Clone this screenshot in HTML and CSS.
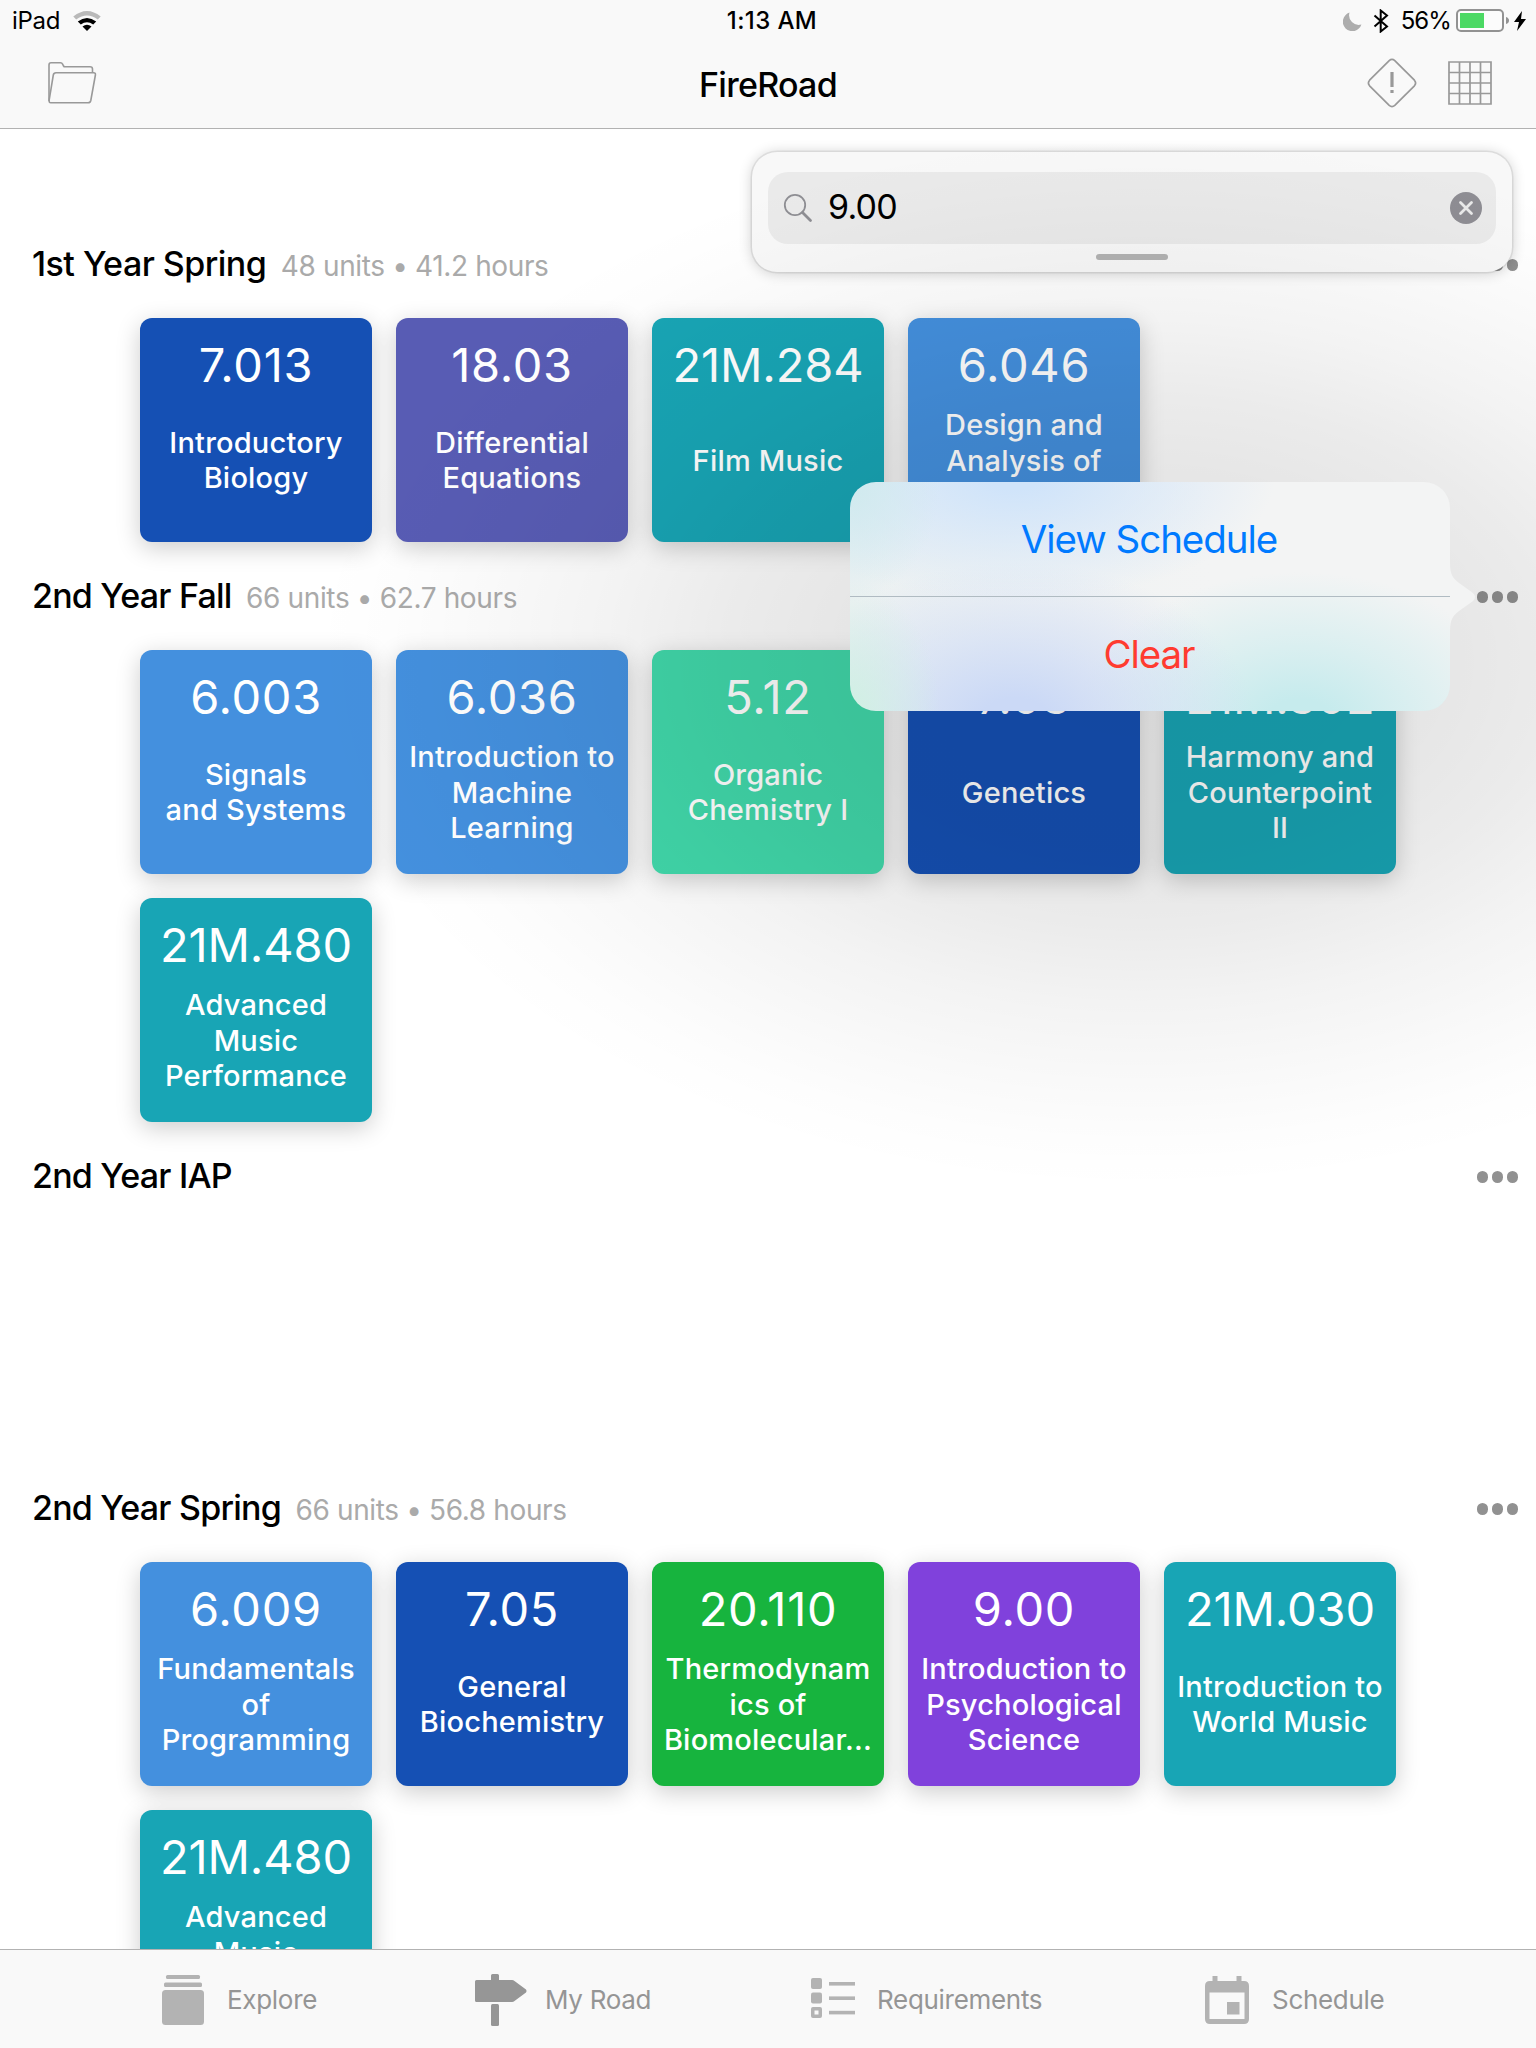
FILE: index.html
```html
<!DOCTYPE html>
<html lang="en">
<head>
<meta charset="utf-8">
<title>FireRoad</title>
<link rel="stylesheet" href="styles.css">
</head>
<body>
<div class="app">
  <header class="top">
    <div class="status">
      <div class="status-side">
        <span class="carrier">iPad</span>
        <svg class="wifi" width="28" height="20" viewBox="0 0 28 20"><path d="M0.300 5.500Q14 -5.500 27.700 5.500L24.800 8.400Q14 0.500 3.200 8.400Z" fill="#b9b9b9"/><path d="M4.800 10.600Q14 3.400 23.200 10.600L20.200 13.600Q14 9 7.800 13.600Z"/><path d="M9.500 15.500Q14 12.200 18.500 15.500L14 20Z"/></svg>
      </div>
      <span class="clock">1:13 AM</span>
      <div class="status-side status-right">
        <svg class="moon" width="19" height="19" viewBox="0 0 19 19"><path d="M6.500 0.600A9.500 9.500 0 1 0 18.400 12.500A9.600 9.600 0 0 1 6.500 0.600Z" fill="#adadad"/></svg>
        <svg class="bluetooth" width="16" height="24" viewBox="0 0 16 24"><path d="M1.500 6.500L14 17.500L7.700 22.500V1.500L14 6.500L1.500 17.500" fill="none" stroke="#000" stroke-width="2"/></svg>
        <span class="percent">56%</span>
        <svg class="battery" width="54" height="24" viewBox="0 0 54 24"><rect x="1" y="1" width="46" height="21" rx="4" fill="#fcfcfc" stroke="#929292" stroke-width="2"/><rect x="4" y="4" width="24" height="15" fill="#4cd964"/><path d="M50 8Q53 9 53 11.500T50 15Z" fill="#929292"/></svg>
        <svg class="bolt" width="12" height="20" viewBox="0 0 12 20"><path d="M8 0L0 11H5L3 20L12 8H7Z"/></svg>
      </div>
    </div>
    <div class="nav">
      <svg class="folder" width="50" height="44" viewBox="0 0 50 44" fill="none" stroke="#999" stroke-width="1.600" stroke-linejoin="round"><path d="M2 40V4Q2 1.800 4 1.800H13.500Q15 1.800 15.600 3.200L16.500 5Q17 5.800 18 5.800H43Q45.500 5.800 45.500 8V11.500"/><path d="M9 11.800H46.500Q48.800 11.800 48.400 14L43.800 39.500Q43.300 41.800 41 41.800H3.800Q1.800 41.800 2.200 39L6.300 14Q6.700 11.800 9 11.800Z"/></svg>
      <h1 class="title">FireRoad</h1>
      <div class="nav-actions">
        <svg width="50" height="50" viewBox="0 0 50 50" fill="none" stroke="#999"><path d="M22.200 2.600Q25 0.200 27.800 2.600L47.400 22.200Q49.800 25 47.400 27.800L27.800 47.400Q25 49.800 22.200 47.400L2.600 27.800Q0.200 25 2.600 22.200Z" stroke-width="1.700"/><path d="M25 14V29M25 32V35" stroke-width="3.200"/></svg>
        <svg width="44" height="44" viewBox="0 0 44 44" fill="none" stroke="#999" stroke-width="1.700"><path d="M1 1H43V43H1ZM11.500 1V43M22 1V43M32.500 1V43M1 11.500H43M1 22H43M1 32.500H43"/></svg>
      </div>
    </div>
  </header>

  <main class="road">
    <section class="term">
      <div class="term-head"><h2 class="loose">1st Year Spring</h2><span class="stats">48 units • 41.2 hours</span><span class="dots"><i></i><i></i><i></i></span></div>
      <div class="courses">
        <article class="card blue"><b>7.013</b><p>Introductory<br>Biology</p></article>
        <article class="card indigo"><b>18.03</b><p>Differential<br>Equations</p></article>
        <article class="card teal"><b>21M.284</b><p>Film Music</p></article>
        <article class="card sky"><b>6.046</b><p>Design and<br>Analysis of<br>&nbsp;</p></article>
      </div>
    </section>
    <section class="term">
      <div class="term-head"><h2>2nd Year Fall</h2><span class="stats">66 units • 62.7 hours</span><span class="dots"><i></i><i></i><i></i></span></div>
      <div class="courses">
        <article class="card sky"><b>6.003</b><p>Signals<br>and Systems</p></article>
        <article class="card sky"><b>6.036</b><p>Introduction to<br>Machine<br>Learning</p></article>
        <article class="card mint"><b>5.12</b><p>Organic<br>Chemistry I</p></article>
        <article class="card blue"><b>7.03</b><p>Genetics</p></article>
        <article class="card teal"><b>21M.302</b><p>Harmony and<br>Counterpoint<br>II</p></article>
        <article class="card teal"><b>21M.480</b><p>Advanced<br>Music<br>Performance</p></article>
      </div>
    </section>
    <section class="term">
      <div class="term-head"><h2>2nd Year IAP</h2><span class="dots"><i></i><i></i><i></i></span></div>
      <div class="courses"></div>
    </section>
    <section class="term">
      <div class="term-head"><h2>2nd Year Spring</h2><span class="stats">66 units • 56.8 hours</span><span class="dots"><i></i><i></i><i></i></span></div>
      <div class="courses">
        <article class="card sky"><b>6.009</b><p>Fundamentals<br>of<br>Programming</p></article>
        <article class="card blue"><b>7.05</b><p>General<br>Biochemistry</p></article>
        <article class="card green"><b>20.110</b><p>Thermodynam<br>ics of<br>Biomolecular...</p></article>
        <article class="card violet"><b>9.00</b><p>Introduction to<br>Psychological<br>Science</p></article>
        <article class="card teal"><b>21M.030</b><p>Introduction to<br>World Music</p></article>
        <article class="card teal"><b>21M.480</b><p>Advanced<br>Music<br>Performance</p></article>
      </div>
    </section>

    <div class="search-panel">
      <div class="search-field">
        <svg width="30" height="30" viewBox="0 0 30 30" fill="none" stroke="#8e8e93"><circle cx="12" cy="12" r="10.200" stroke-width="1.800"/><path d="M19.500 19.500L27.500 27.500" stroke-width="2.800" stroke-linecap="round"/></svg>
        <span class="query">9.00</span>
        <svg width="32" height="32" viewBox="0 0 32 32"><circle cx="16" cy="16" r="16" fill="#8e8d93"/><path d="M10.500 10.500L21.500 21.500M21.500 10.500L10.500 21.500" stroke="#e9e9e9" stroke-width="2.800" stroke-linecap="round"/></svg>
      </div>
      <div class="grip"></div>
    </div>

    <div class="shade"></div>
    <div class="popover">
      <button class="action">View Schedule</button>
      <button class="action danger">Clear</button>
      <svg class="tail" width="28" height="68" viewBox="0 0 28 68"><path d="M0 0C0 12 3 15 9 20L21 28.500Q29 34 21 39.500L9 48C3 53 0 56 0 68Z" fill="#f3f4f4"/></svg>
    </div>
  </main>

  <nav class="tabs">
    <a class="tab explore"><svg width="42" height="52" viewBox="0 0 42 52" fill="#b3b3b3"><rect x="4" y="1" width="34" height="4" rx="1.500"/><rect x="2" y="8.500" width="38" height="4.500" rx="1.500"/><rect x="0" y="16" width="42" height="35" rx="3.500"/></svg><span>Explore</span></a>
    <a class="tab myroad"><svg width="52" height="52" viewBox="0 0 52 52" fill="#969696"><path d="M16 6V1.500Q16 0 17.500 0H22.500Q24 0 24 1.500V6H37Q38.500 6 39.500 7L51 15.500Q52 17 51 18.500L39.500 27Q38.500 28 37 28H1.500Q0 28 0 26.500V7.500Q0 6 1.500 6Z"/><rect x="16" y="30" width="8" height="22" rx="1.500"/></svg><span>My Road</span></a>
    <a class="tab reqs"><svg width="44" height="52" viewBox="0 0 44 52" fill="#b3b3b3"><rect x="0" y="4" width="11" height="11" rx="2"/><rect x="0" y="18.500" width="11" height="11" rx="2"/><path d="M2 33H9Q11 33 11 35V42Q11 44 9 44H2Q0 44 0 42V35Q0 33 2 33ZM3.500 36.500V40.500H7.500V36.500Z" fill-rule="evenodd"/><rect x="18" y="8" width="26" height="3.600"/><rect x="18" y="22.400" width="26" height="3.600"/><rect x="18" y="36.800" width="26" height="3.600"/></svg><span>Requirements</span></a>
    <a class="tab sched"><svg width="44" height="52" viewBox="0 0 44 52" fill="#b3b3b3"><path d="M7.500 2H12.500V7H31.500V2H36.500V7H39Q44 7 44 12V45Q44 50 39 50H5Q0 50 0 45V12Q0 7 5 7H7.500ZM4.500 18.500V45H39.500V18.500Z" fill-rule="evenodd"/><rect x="22" y="28" width="12.500" height="12.500"/></svg><span>Schedule</span></a>
  </nav>
</div>
</body>
</html>
```
FILE: styles.css
```css
* { box-sizing: border-box; }
body, h1, h2, p { margin: 0; }
body {
  font-family: Inter, "Liberation Sans", sans-serif;
  color: #000;
  background: #fff;
}
svg { display: block; flex: none; }
.app {
  width: 1536px;
  height: 2048px;
  display: flex;
  flex-direction: column;
  overflow: hidden;
}

/* Status and navigation bars */
.top {
  height: 129px;
  flex: none;
  background: #f9f9f9;
  border-bottom: 1px solid #b2b2b2;
}
.status {
  height: 40px;
  display: grid;
  grid-template-columns: 1fr auto 1fr;
  align-items: center;
  padding: 2px 10px 0 12px;
  font-size: 24px;
  line-height: 38px;
}
.status-side { display: flex; align-items: center; }
.status-right { justify-content: flex-end; }
.wifi { margin-left: 13px; }
.carrier { letter-spacing: -0.3px; }
.clock { margin-left: 6px; font-weight: 500; letter-spacing: .4px; }
.bluetooth { margin-left: 11px; }
.percent { margin-left: 12px; letter-spacing: -0.9px; }
.battery { margin-left: 5px; }
.bolt { margin-left: 4px; }
.nav {
  height: 88px;
  display: grid;
  grid-template-columns: 1fr auto 1fr;
  align-items: center;
  padding: 0 44px 2px 47px;
}
.title { padding: 4px 3px 0 0; font-size: 34px; font-weight: 500; line-height: 44px; letter-spacing: -0.75px; }
.nav-actions { display: flex; justify-content: flex-end; align-items: center; gap: 31px; }

/* Terms */
.road {
  position: relative;
  flex: 1;
  min-height: 0;
  padding-top: 81px;
  overflow: hidden;
}
.term-head {
  height: 108px;
  display: flex;
  align-items: center;
  padding: 0 18px 0 32px;
}
.term-head h2 { font-size: 34px; font-weight: 500; line-height: 44px; letter-spacing: -0.78px; }
.term-head .loose { letter-spacing: -0.53px; }
.stats { margin: 4px 0 0 14.500px; font-size: 28px; line-height: 36px; letter-spacing: -0.37px; color: #aaa; }
.dots { display: flex; gap: 3.500px; margin: 2px 0 0 auto; }
.dots i { width: 11.300px; height: 11.300px; border-radius: 50%; background: #919191; }
.courses {
  min-height: 224px;
  display: grid;
  grid-template-columns: repeat(5, 232px);
  gap: 24px;
  padding-left: 140px;
}
.card {
  height: 224px;
  padding-top: 18px;
  border-radius: 12px;
  color: #fff;
  text-align: center;
  box-shadow: 0 6px 24px rgba(0, 0, 0, .2);
}
.card b {
  display: block;
  font-size: 47px;
  font-weight: 400;
  line-height: 58px;
  letter-spacing: .7px;
}
.teal b { letter-spacing: -0.1px; }
.card p {
  height: 106px;
  margin-top: 13.300px;
  display: grid;
  align-content: center;
  font-size: 29px;
  font-weight: 450;
  line-height: 35.600px;
  letter-spacing: .2px;
  white-space: nowrap;
}
.blue { background: #1550b4; }
.indigo { background: #585cb4; }
.teal { background: #18a5b5; }
.sky { background: #4490de; }
.mint { background: #41d8aa; }
.green { background: #17b43e; }
.violet { background: #8041dc; }

/* Floating search drawer */
.search-panel {
  position: absolute;
  left: 752px;
  top: 23px;
  width: 760px;
  height: 120px;
  padding: 20px 16px 0;
  border-radius: 25px;
  background: #f8f8f8;
  box-shadow: 0 0 0 1.500px rgba(0, 0, 0, .07), 0 1px 14px rgba(0, 0, 0, .2);
}
.search-field {
  height: 72px;
  display: flex;
  align-items: center;
  padding: 0 14px 0 15px;
  border-radius: 20px;
  background: #eaeaea;
}
.query { flex: 1; margin: -3px 0 0 15px; font-size: 34px; line-height: 44px; letter-spacing: -0.8px; }
.grip { width: 72px; height: 6px; margin: 10px auto 0; border-radius: 3px; background: #b3b3b3; }

/* Soft dimming round the term menu */
.shade {
  position: absolute;
  inset: 0;
  background: radial-gradient(830px 530px at 1140px 532px,
    rgba(0, 0, 0, .105) 0%, rgba(0, 0, 0, .099) 36%, rgba(0, 0, 0, .08) 50%,
    rgba(0, 0, 0, .049) 65%, rgba(0, 0, 0, .022) 80%, rgba(0, 0, 0, .007) 91%, rgba(0, 0, 0, 0) 100%);
}

/* Term menu */
.popover {
  position: absolute;
  left: 850px;
  top: 353px;
  width: 600px;
  height: 229px;
  border-radius: 26px;
  background:
    radial-gradient(90px 120px at 0 0, #cfeaee, rgba(207, 234, 238, 0)),
    radial-gradient(260px 125px at 165px -5px, #d0e4fa 10%, rgba(208, 228, 250, .5) 55%, rgba(208, 228, 250, 0)),
    radial-gradient(90px 130px at 0 100%, #d0f0e3, rgba(208, 240, 227, 0)),
    radial-gradient(240px 160px at 165px 240px, #cbd9f6 15%, rgba(203, 217, 246, .5) 55%, rgba(203, 217, 246, 0)),
    radial-gradient(225px 150px at 450px 240px, #c6ebed 15%, rgba(198, 235, 237, .5) 55%, rgba(198, 235, 237, 0)),
    linear-gradient(90deg, #ecf1f2, #f3f4f4 60%);
}
.action {
  display: block;
  width: 100%;
  height: 114px;
  padding: 0 2px 0 0;
  border: 0;
  background: none;
  font: 400 38.500px/114px Inter, "Liberation Sans", sans-serif;
  letter-spacing: -1.05px;
  color: #007aff;
}
.danger { height: 115px; border-top: 1px solid #b0bbc2; color: #ff3b30; }
.tail { position: absolute; left: 600px; top: 81px; }

/* Tab bar */
.tabs {
  height: 99px;
  flex: none;
  display: flex;
  padding-left: 162px;
  border-top: 1px solid #b2b2b2;
  background: #f9f9f9;
  font-size: 26px;
  letter-spacing: -0.3px;
  color: #959595;
}
.tab { display: flex; align-items: center; height: 100px; gap: 23px; white-space: nowrap; }
.tab span { margin-top: -2px; }
.explore { width: 313px; }
.myroad { width: 336px; gap: 18px; }
.reqs { width: 394px; gap: 22px; }
```
